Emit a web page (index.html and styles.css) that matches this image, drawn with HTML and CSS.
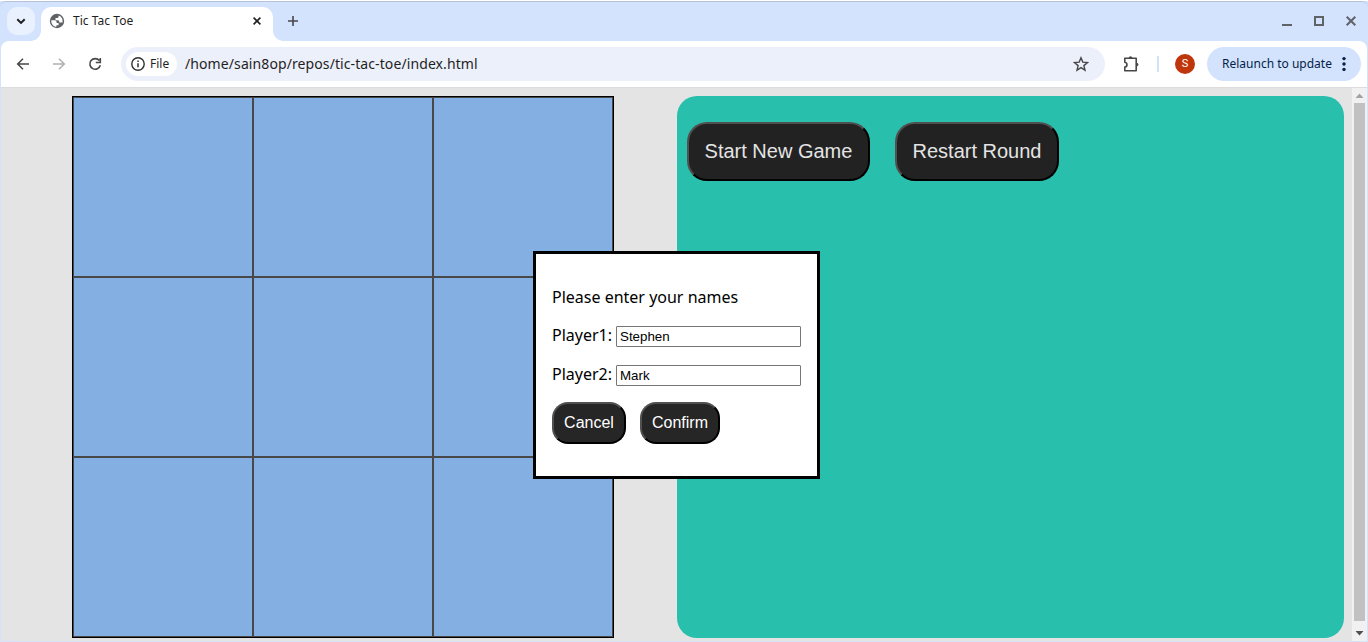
FILE: index.html
```html
<!DOCTYPE html>
<html lang="en">
<head>
<meta charset="utf-8">
<title>Tic Tac Toe</title>
<link rel="stylesheet" href="styles.css">
</head>
<body>
<div class="window">
  <header class="tabstrip">
    <button class="tab-search" aria-label="Search tabs"><svg width="28" height="28" viewBox="0 0 28 28"><path d="M10.300 12.200l3.700 3.700 3.700-3.700" fill="none" stroke="#1f1f1f" stroke-width="2"/></svg></button>
    <div class="tab">
      <svg class="globe" width="16" height="16" viewBox="0 0 16 16"><circle cx="8" cy="8" r="7.200" fill="#5f6368"/><path d="M2.300 7.200h3.200c1.300 0 2.100.8 2.100 2v.8h2v2.200H7.400v1.600C4.500 13.700 2.300 11.300 2.300 8zM9.600 2.500v.9c0 .9-.7 1.500-1.500 1.500H6.500v2.300h2.200c.9 0 1.500.6 1.500 1.400v.9h3.300A5.700 5.700 0 0 0 9.600 2.500z" fill="#fff"/></svg>
      <span class="tab-title">Tic Tac Toe</span>
      <svg class="tab-close" width="16" height="16" viewBox="0 0 16 16"><path d="M4.600 4.600l6.800 6.800M11.400 4.600l-6.800 6.800" stroke="#1f1f1f" stroke-width="1.600"/></svg>
    </div>
    <svg class="new-tab" width="16" height="16" viewBox="0 0 16 16"><path d="M8 3v10M3 8h10" stroke="#474747" stroke-width="1.600"/></svg>
    <div class="controls">
      <svg width="16" height="16" viewBox="0 0 16 16"><path d="M3 12h10" stroke="#5f6368" stroke-width="2"/></svg>
      <svg width="16" height="16" viewBox="0 0 16 16"><path d="M4 4h8v8H4z" fill="none" stroke="#5f6368" stroke-width="2"/></svg>
      <svg width="16" height="16" viewBox="0 0 16 16"><path d="M3.700 3.700l8.600 8.600M12.300 3.700l-8.600 8.600" stroke="#5f6368" stroke-width="2"/></svg>
    </div>
  </header>
  <div class="main">
    <nav class="toolbar">
      <div class="nav">
        <svg width="16" height="16" viewBox="0 0 16 16"><path d="M14 8H3M8 2.700L2.700 8 8 13.300" fill="none" stroke="#474747" stroke-width="1.500"/></svg>
        <svg width="16" height="16" viewBox="0 0 16 16"><path d="M2 8h11M8 2.700L13.300 8 8 13.300" fill="none" stroke="#b0b0b0" stroke-width="1.500"/></svg>
        <svg width="16" height="16" viewBox="0 0 16 16"><path d="M12.300 4.600A5.300 5.300 0 1 0 13.300 9.300M13.300 2v4.500H8.800" fill="none" stroke="#474747" stroke-width="1.600"/></svg>
      </div>
      <div class="omnibox">
        <div class="chip"><svg width="14" height="14" viewBox="0 0 14 14"><circle cx="7" cy="7" r="6.200" fill="none" stroke="#303030" stroke-width="1.400"/><path d="M7 6.200v4M7 3.600v1.500" stroke="#303030" stroke-width="1.500"/></svg><span>File</span></div>
        <span class="url">/home/sain8op/repos/tic-tac-toe/index.html</span>
        <svg class="star" width="16" height="16" viewBox="0 0 16 16"><path d="M8 1.800l1.800 4.300 4.700.4-3.600 3.100 1.100 4.600L8 11.700l-4 2.500 1.100-4.600-3.600-3.100 4.700-.4z" fill="none" stroke="#474747" stroke-width="1.400"/></svg>
      </div>
      <svg class="puzzle" width="18" height="18" viewBox="0 0 18 18"><path d="M2.800 3.300H14.200V15.700H2.800v-3.600c2.900-.5 2.900-4.300 0-4.800z" fill="none" stroke="#474747" stroke-width="1.600" stroke-linejoin="round"/><path d="M6.700 3.200c0-2.700 3.600-2.700 3.600 0zM14.400 7.700c2.700 0 2.700 3.600 0 3.600z" fill="#474747"/></svg>
      <div class="divider"></div>
      <div class="avatar">S</div>
      <div class="relaunch"><span>Relaunch to update</span><svg width="4" height="16" viewBox="0 0 4 16"><g fill="#041e49"><circle cx="2" cy="2.600" r="1.700"/><circle cx="2" cy="8" r="1.700"/><circle cx="2" cy="13.400" r="1.700"/></g></svg></div>
    </nav>
    <div class="viewport">
      <main class="page">
        <div class="board">
          <div class="cell"></div><div class="cell"></div><div class="cell"></div>
          <div class="cell"></div><div class="cell"></div><div class="cell"></div>
          <div class="cell"></div><div class="cell"></div><div class="cell"></div>
        </div>
        <section class="panel">
          <button class="btn btn-large start">Start New Game</button>
          <button class="btn btn-large restart">Restart Round</button>
        </section>
      </main>
      <div class="scrollbar">
        <svg width="15" height="15" viewBox="0 0 15 15"><path d="M3.500 10l4-4.500 4 4.500z" fill="#a3a3a3"/></svg>
        <div class="thumb"></div>
        <svg width="15" height="20" viewBox="0 0 15 20"><path d="M3.500 10h8l-4 4.500z" fill="#505050"/></svg>
      </div>
      <form class="dialog">
        <p class="prompt">Please enter your names</p>
        <div class="field"><label for="p1">Player1:</label><input id="p1" type="text" value="Stephen"></div>
        <div class="field"><label for="p2">Player2:</label><input id="p2" type="text" value="Mark"></div>
        <div class="actions"><button type="button" class="btn cancel">Cancel</button><button type="button" class="btn confirm">Confirm</button></div>
      </form>
    </div>
  </div>
</div>
</body>
</html>
```
FILE: styles.css
```css
* { box-sizing: border-box; }
body { margin: 0; font-family: "Noto Sans", sans-serif; color: #000; overflow: hidden; }
svg { display: block; flex: none; }
.window { height: 642px; background: #d3e3fd; border-top: 1px solid #fff; display: flex; flex-direction: column; }
.tabstrip { height: 40px; flex: none; border-top: 1px solid #b4c1d8; border-radius: 6px 6px 0 0; padding: 5px 9px 0 7px; display: flex; align-items: flex-start; }
.tab-search { width: 28px; height: 28px; padding: 0; border: 0; border-radius: 10px; background: #e9f1fe; margin-right: 6px; }
.tab { position: relative; width: 232px; height: 34px; background: #fff; border-radius: 10px 10px 0 0; display: flex; align-items: center; padding: 0 8px 6px; }
.tab::before, .tab::after { content: ""; position: absolute; bottom: 0; width: 10px; height: 10px; }
.tab::before { left: -10px; background: radial-gradient(circle at 0 0, transparent 9.5px, #fff 10px); }
.tab::after { right: -10px; background: radial-gradient(circle at 100% 0, transparent 9.5px, #fff 10px); }
.tab-title { font-size: 12px; color: #1f1f1f; margin-left: 8px; line-height: 16px; letter-spacing: 0.04px; }
.tab-close { margin-left: auto; }
.new-tab { margin: 6px 0 0 12px; }
.controls { display: flex; gap: 16px; margin: 6px 0 0 auto; }
.main { flex: 1; min-height: 0; margin: 0 1px 1px; background: #fff; border-radius: 8px 8px 0 0; display: flex; flex-direction: column; }
.toolbar { height: 46px; flex: none; display: flex; align-items: center; padding: 0 6px 0 14px; }
.nav { display: flex; gap: 20px; width: 106px; }
.omnibox { width: 984px; height: 34px; border-radius: 17px; background: #ecf0fa; display: flex; align-items: center; padding: 0 16px 0 5px; }
.chip { width: 51px; height: 24px; border-radius: 12px; background: #fff; display: flex; align-items: center; gap: 5px; padding-left: 5px; font-size: 12px; color: #1f1f1f; }
.chip span, .relaunch span { padding-bottom: 2px; }
.url { font-size: 14px; color: #1f1f1f; margin-left: 8px; padding-bottom: 2px; letter-spacing: 0.095px; }
.star { margin-left: auto; }
.puzzle { margin-left: 17px; }
.divider { width: 2px; height: 16px; background: #d3e3fd; margin-left: 17px; }
.avatar { width: 20px; height: 20px; border-radius: 50%; background: #bf360c; color: #fff; font: 11px/20px Roboto, sans-serif; text-align: center; margin-left: 16px; }
.relaunch { width: 154px; height: 34px; border-radius: 17px; background: #d3e3fd; color: #041e49; font-size: 12px; margin-left: 12px; padding: 0 15px; display: flex; align-items: center; justify-content: space-between; white-space: nowrap; }
.viewport { position: relative; flex: 1; min-height: 0; background: #e4e4e4; display: flex; border-top: 1px solid #dcdcdc; }
.page { flex: 1; display: flex; justify-content: space-between; padding: 8px 8px 0 71px; }
.board { width: 542px; height: 542px; border: 1px solid #000; display: grid; grid-template: repeat(3, 180px) / repeat(3, 180px); }
.cell { background: #83afe2; border: 1px solid #484848; }
.panel { width: 667px; height: 542px; border-radius: 20px; background: #28bfad; display: flex; align-items: flex-start; gap: 25px; padding: 26px 10px; }
.btn { background: #262626; color: #fff; border: 2px outset #000; border-color: #505050 #000 #000 #505050; border-radius: 16px; font: 16px "Liberation Sans", Arial, sans-serif; padding: 0; height: 42px; white-space: nowrap; }
.btn-large { font-size: 20px; height: 59px; border-radius: 20px; background: #222; color: #e4e4e4; }
.start { width: 183px; }
.restart { width: 164px; }
.cancel { width: 74px; }
.confirm { width: 80px; }
.scrollbar { width: 15px; background: #f1f1f1; display: flex; flex-direction: column; align-items: center; }
.thumb { width: 11px; flex: 1; background: #c1c1c1; }
.dialog { position: absolute; left: 532px; top: 163px; width: 287px; height: 228px; border: 3px solid #000; background: #fff; padding: 32px 16px 0; font-size: 16px; line-height: 22px; }
.prompt { margin: 0 0 16px; }
.field { display: flex; justify-content: space-between; margin-bottom: 16px; height: 23px; }
.field input { width: 185px; height: 21px; margin-top: 2px; padding: 1px 3px; border: 1px solid #767676; border-radius: 1px; background: #fff; color: #000; font: 13.333px "Liberation Sans", Arial, sans-serif; }
.actions { display: flex; gap: 14px; }
```
